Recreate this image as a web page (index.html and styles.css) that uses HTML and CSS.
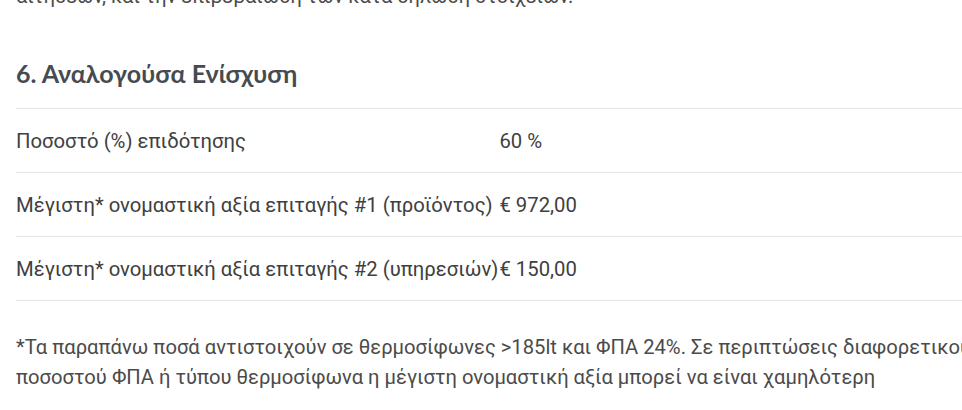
FILE: index.html
```html
<!DOCTYPE html>
<html lang="el">
<head>
<meta charset="utf-8">
<title>Αναλογούσα Ενίσχυση</title>
<link rel="stylesheet" href="styles.css">
</head>
<body>
<div class="page">
  <p class="intro">αιτήσεων, και την επιβεβαίωση των κατά δήλωση στοιχείων.</p>
  <h2 class="section-title">6. Αναλογούσα Ενίσχυση</h2>
  <div class="info-table">
    <div class="cell label">Ποσοστό (%) επιδότησης</div>
    <div class="cell value">60 %</div>
    <div class="cell label">Μέγιστη* ονομαστική αξία επιταγής #1 (προϊόντος)</div>
    <div class="cell value">€ 972,00</div>
    <div class="cell label">Μέγιστη* ονομαστική αξία επιταγής #2 (υπηρεσιών)</div>
    <div class="cell value">€ 150,00</div>
  </div>
  <p class="note">*Τα παραπάνω ποσά αντιστοιχούν σε θερμοσίφωνες &gt;185lt και ΦΠΑ 24%. Σε περιπτώσεις διαφορετικού ποσοστού ΦΠΑ ή τύπου θερμοσίφωνα η μέγιστη ονομαστική αξία μπορεί να είναι χαμηλότερη</p>
</div>
</body>
</html>
```
FILE: styles.css
```css
html, body {
  margin: 0;
  padding: 0;
  overflow: hidden;
  background: #ffffff;
}

.page {
  width: 975px;
  padding: 0 0 0 16px;
  font-family: Roboto, "Noto Sans", sans-serif;
  color: #4b4b4b;
  font-size: 20px;
}

.intro {
  margin: -17px 0 0;
  line-height: 26px;
}

.section-title {
  margin: 48px 0 0;
  font-family: Lato, "Open Sans", sans-serif;
  font-weight: 700;
  font-size: 25px;
  line-height: 32px;
  color: #464b52;
  padding-bottom: 19px;
  border-bottom: 1px solid #e6e6e6;
}

.info-table {
  display: grid;
  grid-template-columns: max-content 1fr;
}

.cell {
  height: 63px;
  display: flex;
  align-items: center;
  border-bottom: 1px solid #e6e6e6;
  font-size: 20.3px;
  color: #404040;
}

.value {
  padding-left: 1px;
}

.note {
  margin: 31px 0 0;
  line-height: 30px;
  font-size: 20.2px;
}
```
